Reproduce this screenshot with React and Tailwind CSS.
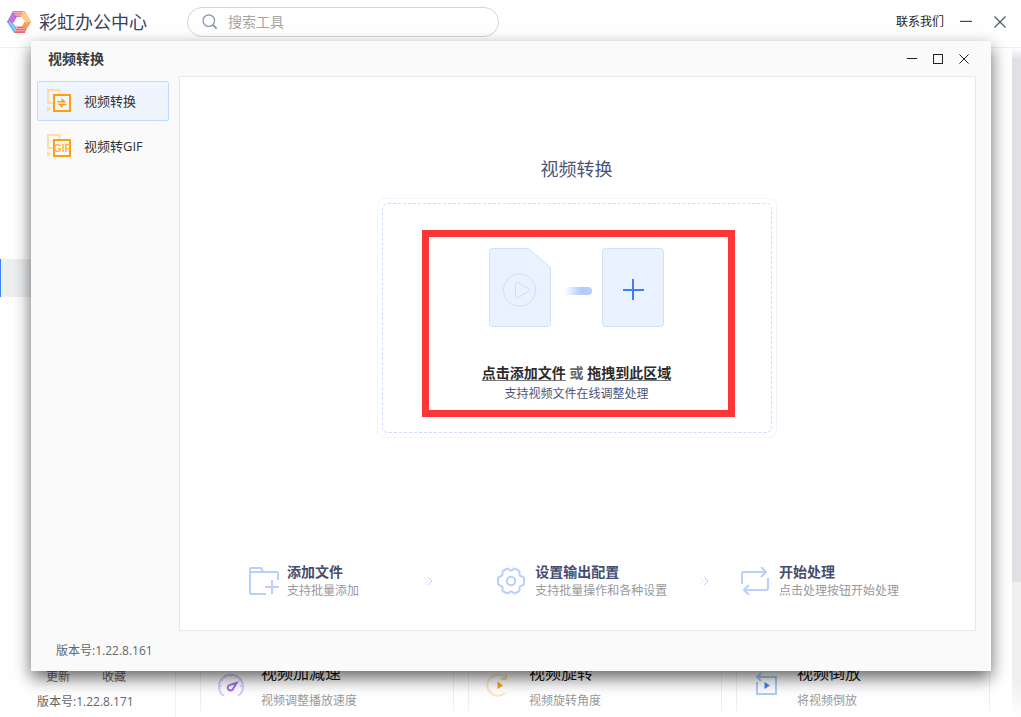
import React, { useState } from 'react';

const Logo = () => (
    <svg width="24" height="22" viewBox="0 0 24 22" fill="none" aria-hidden="true">
        <path d="M6 0H17L14 6H9.500L7 8Z" fill="#f5808a" />
        <path d="M16 0H18L24 11H18L14 5Z" fill="#fcc377" />
        <path d="M24 11L18.500 20L15 15.500L17.500 11Z" fill="#fa9a5c" />
        <path d="M18 22H7L9 15.500H15L19 18Z" fill="#f5616c" />
        <path d="M7 22L0 11L2 8L10 16.500Z" fill="#6fb9f5" />
        <path d="M0 11L6 0L10 5.500L6.500 12Z" fill="#b164dc" />
        <path d="M6 1.800H17M7 4H15M9 17.600H18M8 19.800H18" stroke="#fff" strokeWidth="0.700" opacity="0.700" />
        <path d="M1.500 9L9 20M3 6.500L10 17M4.500 4L8 9M17 3L22 11M15.500 5L20 13" stroke="#fff" strokeWidth="0.700" opacity="0.600" />
    </svg>
);

const SearchIcon = () => (
    <svg width="16" height="16" viewBox="0 0 16 16" fill="none" stroke="#8a96ae" strokeWidth="1.3" aria-hidden="true">
        <circle cx="6.8" cy="6.6" r="5.8" />
        <path d="M11 10.8L14.6 14.6" strokeWidth="1.8" />
    </svg>
);

const MinimizeIcon = ({ size }) => (
    <svg width={size} height={size} viewBox="0 0 12 12" stroke="currentColor" strokeWidth="1.2" aria-hidden="true">
        <path d="M0 5.400H12" />
    </svg>
);

const MaximizeIcon = () => (
    <svg width="10" height="10" viewBox="0 0 10 10" fill="none" stroke="currentColor" aria-hidden="true">
        <rect x="0.5" y="0.5" width="9" height="9" />
    </svg>
);

const CloseIcon = ({ size }) => (
    <svg width={size} height={size} viewBox="0 0 12 12" stroke="currentColor" strokeWidth="1.2" aria-hidden="true">
        <path d="M0.5 0.5L11.5 11.5M11.5 0.5L0.5 11.5" />
    </svg>
);

const ToolIcon = ({ children }) => (
    <svg width="25" height="24" viewBox="0 0 25 24" fill="none" aria-hidden="true">
        <path d="M6 14H1V1H12.5V5" stroke="#ffdda6" strokeWidth="2" />
        <path d="M0 17L4.5 20L0 23Z" fill="#ffdda6" />
        <rect x="7" y="6" width="16" height="16" stroke="#ff9f0f" strokeWidth="2" />
        {children}
    </svg>
);

const ConvertIcon = () => (
    <ToolIcon>
        <path d="M10.500 13.500V12H14.500V9L19.500 13.500ZM10.500 14.800H19.500V16.300H15.500V19.300Z" fill="#ff9f0f" />
    </ToolIcon>
);

const GifIcon = () => (
    <ToolIcon>
        <text x="15.2" y="17.500" textAnchor="middle" fontSize="10" fontWeight="700" fontFamily="Liberation Sans, sans-serif" fill="#ffb443">GIF</text>
    </ToolIcon>
);

const FileArt = () => (
    <svg width="175" height="79" viewBox="0 0 175 79" fill="none" aria-hidden="true">
        <defs>
            <linearGradient id="dash" x1="0" x2="1">
                <stop offset="0" stopColor="#b5ccfb" stopOpacity="0" />
                <stop offset="0.6" stopColor="#b5ccfb" />
            </linearGradient>
        </defs>
        <path d="M3.5 0.5H39L61.5 19V75.5Q61.5 78.5 58.5 78.5H3.5Q0.5 78.5 0.5 75.5V3.5Q0.5 0.5 3.5 0.5Z" fill="#eaf1ff" stroke="#d0dffd" />
        <circle cx="30.5" cy="42" r="16.2" stroke="#d0dffd" />
        <path d="M26.5 35.5Q26.5 33.5 28.5 34.5L40 41Q41.5 42 40 43L28.5 49.5Q26.5 50.5 26.5 48.5Z" stroke="#d0dffd" />
        <path d="M75 39H99Q103 39 103 43Q103 47 99 47H75Z" fill="url(#dash)" />
        <rect x="113.5" y="0.5" width="61" height="78" rx="3" fill="#eaf1ff" stroke="#d0dffd" />
        <path d="M134 42H155M144 31V52" stroke="#3f7ff5" strokeWidth="2" />
    </svg>
);

const FolderIcon = () => (
    <svg width="31" height="28" viewBox="0 0 31 28" fill="none" stroke="#b9cffd" strokeWidth="2" aria-hidden="true">
        <path d="M17 27H2Q1 27 1 26V2Q1 1 2 1H12L14 5H28Q29 5 29 6V13" />
        <path d="M1 5H14M16 20H30M23 13V27" />
    </svg>
);

const GearIcon = () => (
    <svg width="28" height="28" viewBox="0 0 28 28" fill="none" stroke="#b9cffd" strokeWidth="2" strokeLinejoin="round" aria-hidden="true">
        <path d="M9.5 2Q11 1 12 2.5Q14 4.5 16 2.5Q17 1 18.500 2L21.500 3.500Q23 4.500 22.500 6Q22 9 25 9.500Q27 10 27 11.500V16.500Q27 18 25 18.500Q22 19 22.500 22Q23 23.500 21.500 24.500L18.500 26Q17 27 16 25.500Q14 23.500 12 25.500Q11 27 9.500 26L6.500 24.500Q5 23.500 5.500 22Q6 19 3 18.500Q1 18 1 16.500V11.500Q1 10 3 9.500Q6 9 5.500 6Q5 4.500 6.500 3.500Z" />
        <circle cx="14" cy="14" r="4.200" />
    </svg>
);

const LoopIcon = () => (
    <svg width="28" height="28" viewBox="0 0 28 28" fill="none" stroke="#b9cffd" strokeWidth="2" aria-hidden="true">
        <path d="M1 17V7Q1 5 3 5H25M20 0L25 5L20 10" />
        <path d="M27 11V21Q27 23 25 23H3M8 18L3 23L8 28" />
    </svg>
);

const StepArrow = () => (
    <svg className="justify-self-center" width="10" height="10" viewBox="0 0 10 10" fill="none" aria-hidden="true">
        <path d="M0.500 1L4.500 5L0.500 9" stroke="#e6edfe" />
        <path d="M5 1L9 5L5 9" stroke="#bdd0fa" />
    </svg>
);

const SpeedIcon = () => (
    <svg width="28" height="28" viewBox="0 0 28 28" fill="none" aria-hidden="true">
        <path d="M7 24.500L4.500 23A12 12 0 1 1 23.500 23L21 24.500" stroke="#dccbf6" strokeWidth="2" />
        <path d="M14 3V6M4 8L6 9.500M24 8L22 9.500M2 15H5M26 15H23M8 4L9.500 6.500M20 4L18.500 6.500" stroke="#dccbf6" strokeWidth="1.500" />
        <path d="M19.500 12L13 14A2.800 2.800 0 1 0 16 18Z" stroke="#a66df0" strokeWidth="2" />
    </svg>
);

const RotateIcon = () => (
    <svg width="28" height="28" viewBox="0 0 28 28" fill="none" aria-hidden="true">
        <path d="M20 6.500A10.500 10.500 0 1 0 20 22" stroke="#ffe6c2" strokeWidth="2" />
        <path d="M16 8H21V3" stroke="#ffd79c" strokeWidth="2" />
        <path d="M12.500 10.500L18 14.500L12.500 18Z" fill="#ff9d0f" />
    </svg>
);

const ReverseIcon = () => (
    <svg width="28" height="28" viewBox="0 0 28 28" fill="none" stroke="#a9cdfb" strokeWidth="2" aria-hidden="true">
        <path d="M4 11V23H23V6H4M8 2L4 6L8 10" />
        <path d="M11.500 11L17 14.500L11.500 18Z" fill="#3d86f8" stroke="none" />
    </svg>
);

const tools = [
    { id: 'convert', name: '视频转换', Icon: ConvertIcon },
    { id: 'gif', name: '视频转GIF', Icon: GifIcon },
];

const steps = [
    { title: '添加文件', desc: '支持批量添加', Icon: FolderIcon },
    { title: '设置输出配置', desc: '支持批量操作和各种设置', Icon: GearIcon },
    { title: '开始处理', desc: '点击处理按钮开始处理', Icon: LoopIcon },
];

const cards = [
    { title: '视频加减速', desc: '视频调整播放速度', Icon: SpeedIcon },
    { title: '视频旋转', desc: '视频旋转角度', Icon: RotateIcon },
    { title: '视频倒放', desc: '将视频倒放', Icon: ReverseIcon },
];

const Header = () => (
    <header className="flex h-12 shrink-0 items-center border-b border-[#f0f0f2] pb-1 pl-[7px] pr-[15px]">
        <Logo />
        <h1 className="ml-2 text-[18px] leading-6 text-[#39415c]">彩虹办公中心</h1>
        <label className="ml-10 flex h-[30px] w-[312px] items-center gap-[10px] rounded-full border border-[#d3d5dc] px-[14px]">
            <SearchIcon />
            <input
                type="text"
                aria-label="搜索工具"
                placeholder="搜索工具"
                className="min-w-0 flex-1 bg-transparent text-[14px] leading-5 outline-none placeholder:text-[#a5a5a5]"
            />
        </label>
        <a href="#contact" className="ml-auto text-[12px] leading-4 text-[#222]">联系我们</a>
        <button type="button" aria-label="最小化" className="ml-4 text-[#39496b]"><MinimizeIcon size={12} /></button>
        <button type="button" aria-label="关闭" className="ml-[22px] text-[#4c5670]"><CloseIcon size={12} /></button>
    </header>
);

const Backdrop = () => (
    <div className="flex min-h-0 flex-1">
        <aside className="flex w-44 shrink-0 flex-col border-r border-[#f0f0f0]">
            <div className="mt-[211px] h-[38px] border-l border-[#3d86f8] bg-[#eceef0]" />
            <div className="mt-auto flex gap-8 pl-[46px] text-[12px] leading-4 text-[#666]">
                <a href="#update">更新</a>
                <a href="#favorites">收藏</a>
            </div>
            <p className="mb-[7px] mt-[9px] pl-[37px] text-[12px] leading-4 text-[#666]">版本号:1.22.8.171</p>
        </aside>
        <main className="relative flex flex-1 flex-col justify-end pl-6 pr-[22px]">
            <div className="grid grid-cols-3 gap-[14px]">
                {cards.map(({ title, desc, Icon }) => (
                    <article key={title} className="flex h-20 gap-4 border-x border-[#eee] pl-4 pt-[26px]">
                        <div className="pt-2"><Icon /></div>
                        <div>
                            <h3 className="text-[16px] leading-5 text-[#111]">{title}</h3>
                            <p className="mt-[9px] text-[12px] leading-[18px] text-[#999]">{desc}</p>
                        </div>
                    </article>
                ))}
            </div>
            <div className="pointer-events-none absolute inset-x-0 bottom-0 h-3 bg-linear-to-t from-white to-transparent" />
        </main>
        <div className="flex w-[9px] shrink-0 flex-col">
            <div className="h-3 bg-linear-to-b from-white to-[#e0e1e5]" />
            <div className="flex-1 bg-[#e0e1e5]" />
            <div className="h-[135px] bg-linear-to-b from-[#f0f0f0] from-75% to-white" />
        </div>
    </div>
);

const DropZone = () => (
    <section className="relative mt-[17px] h-60 w-[400px] rounded-[8px] border border-[#f1f5ff] p-1">
        <div className="flex h-full flex-col items-center rounded-[6px] border border-dashed border-[#cfddfc] pt-11">
            <FileArt />
            <p className="mt-9 text-[14px] font-bold leading-5 text-[#666]">
                <button type="button" className="text-[#2b2b2b] underline decoration-[#777] decoration-1 underline-offset-2">点击添加文件</button>
                {' '}或{' '}
                <button type="button" className="text-[#2b2b2b] underline decoration-[#777] decoration-1 underline-offset-2">拖拽到此区域</button>
            </p>
            <p className="mt-[3px] text-[12px] leading-4 text-[#4c5578]">支持视频文件在线调整处理</p>
        </div>
        <div className="pointer-events-none absolute bottom-5 left-11 right-[41px] top-[31px] border-[7px] border-[#fc3636]" />
    </section>
);

const ToolWindow = () => {
    const [active, setActive] = useState('convert');

    return (
        <div className="absolute bottom-[46px] left-[31px] right-[30px] top-[41px] flex flex-col bg-[#fafafa] shadow-[0_7px_16px_rgba(0,0,0,0.6)]">
            <div className="flex h-[35px] shrink-0 items-center pl-[17px] pr-[22px] text-[#222]">
                <h2 className="text-[14px] font-bold leading-5 text-[#3c3c3c]">视频转换</h2>
                <button type="button" aria-label="最小化" className="ml-auto"><MinimizeIcon size={10} /></button>
                <button type="button" aria-label="最大化" className="ml-4"><MaximizeIcon /></button>
                <button type="button" aria-label="关闭" className="ml-4"><CloseIcon size={10} /></button>
            </div>

            <div className="flex min-h-0 flex-1 pr-[15px]">
                <nav className="flex w-[148px] shrink-0 flex-col gap-[5px] pl-[6px] pr-[10px] pt-[5px]">
                    {tools.map(({ id, name, Icon }) => (
                        <button
                            key={id}
                            type="button"
                            onClick={() => setActive(id)}
                            className={`flex h-10 items-center gap-3 rounded-[2px] border pl-[9px] text-[13px] leading-5 text-[#333] ${active === id ? 'border-[#bfdbff] bg-[#eef5ff]' : 'border-transparent'}`}
                        >
                            <Icon />
                            {name}
                        </button>
                    ))}
                </nav>

                <div className="flex flex-1 flex-col border border-[#e8e8e8] bg-white pt-20">
                    <div className="flex flex-col items-center pr-[2px]">
                        <h3 className="text-[18px] leading-6 text-[#4c5578]">视频转换</h3>
                        <DropZone />
                    </div>

                    <div className="mb-[30px] mt-auto grid grid-cols-[auto_137fr_auto_73fr_auto] items-center pl-[69px] pr-[76px]">
                        {steps.map(({ title, desc, Icon }, i) => (
                            <React.Fragment key={title}>
                                {i > 0 && <StepArrow />}
                                <div className="flex items-center">
                                    <div className="w-[38px] shrink-0"><Icon /></div>
                                    <div>
                                        <h4 className="text-[14px] font-bold leading-5 text-[#454d6e]">{title}</h4>
                                        <p className="text-[12px] leading-[18px] text-[#999]">{desc}</p>
                                    </div>
                                </div>
                            </React.Fragment>
                        ))}
                    </div>
                </div>
            </div>

            <p className="flex h-10 shrink-0 items-center pl-[25px] text-[12px] leading-4 text-[#666]">版本号:1.22.8.161</p>
        </div>
    );
};

const App = () => (
    <div className="relative flex h-screen min-h-[600px] flex-col overflow-hidden bg-white font-['Open_Sans','Noto_Sans_CJK_SC',sans-serif]">
        <Header />
        <Backdrop />
        <ToolWindow />
    </div>
);

export default App;
